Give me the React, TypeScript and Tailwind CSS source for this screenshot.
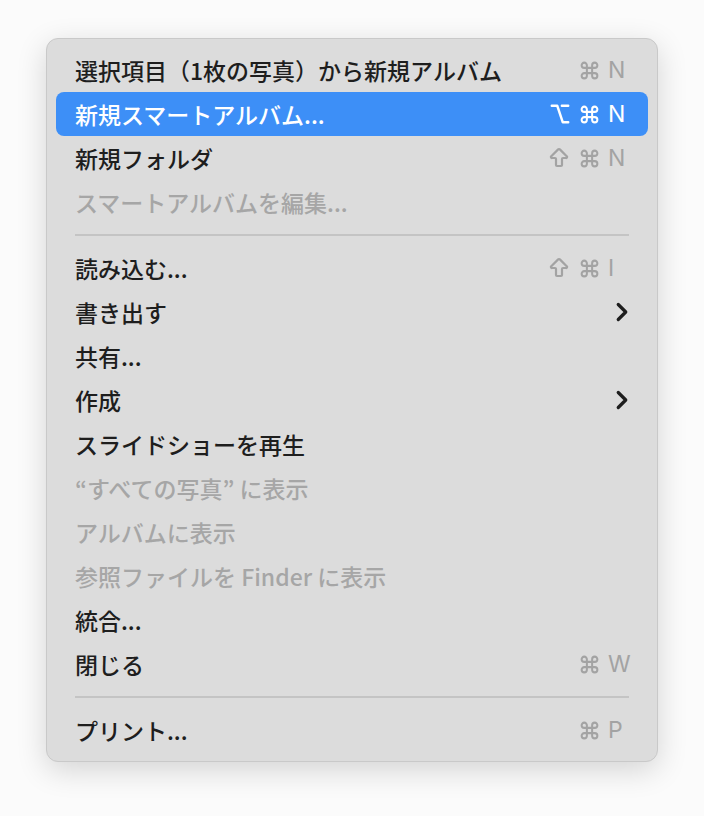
import { ArrowBigUp, ChevronRight, Command, Option } from 'lucide-react'

type Key = 'cmd' | 'opt' | 'shift' | string

interface Item {
  label: string
  keys?: Key[]
  disabled?: boolean
  active?: boolean
  submenu?: boolean
}

type Entry = Item | 'sep'

const entries: Entry[] = [
  { label: '選択項目（1枚の写真）から新規アルバム', keys: ['cmd', 'N'] },
  { label: '新規スマートアルバム...', keys: ['opt', 'cmd', 'N'], active: true },
  { label: '新規フォルダ', keys: ['shift', 'cmd', 'N'] },
  { label: 'スマートアルバムを編集...', disabled: true },
  'sep',
  { label: '読み込む...', keys: ['shift', 'cmd', 'I'] },
  { label: '書き出す', submenu: true },
  { label: '共有...' },
  { label: '作成', submenu: true },
  { label: 'スライドショーを再生' },
  { label: '“すべての写真” に表示', disabled: true },
  { label: 'アルバムに表示', disabled: true },
  { label: '参照ファイルを Finder に表示', disabled: true },
  { label: '統合...' },
  { label: '閉じる', keys: ['cmd', 'W'] },
  'sep',
  { label: 'プリント...', keys: ['cmd', 'P'] },
]

function KeyGlyph({ k }: { k: Key }) {
  if (k === 'cmd') return <Command size={21} strokeWidth={2.3} />
  if (k === 'opt') return <Option size={22} strokeWidth={2.6} />
  if (k === 'shift') return <ArrowBigUp size={24} strokeWidth={2.2} />
  return (
    <span className="text-[23px] leading-none font-['Inter',sans-serif] w-[18px] text-left whitespace-nowrap">
      {k}
    </span>
  )
}

function MenuRow({ item }: { item: Item }) {
  const text = item.active ? 'text-white' : item.disabled ? 'text-[#a6a6a6]' : 'text-[#1e1e1e]'
  const keyColor = item.active ? 'text-white' : 'text-[#a3a3a3]'
  return (
    <div
      className={`h-[44px] flex items-center justify-between pl-[19px] pr-[22px] rounded-[8px] ${item.active ? 'bg-[#3d8ff7]' : ''}`}
    >
      <span className={`text-[23px] leading-none font-medium whitespace-nowrap ${text}`}>{item.label}</span>
      {item.keys && (
        <span className={`flex items-center gap-[8px] ${keyColor}`}>
          {item.keys.map((k, i) => <KeyGlyph key={i} k={k} />)}
        </span>
      )}
      {item.submenu && (
        <ChevronRight size={30} strokeWidth={2.6} className="text-[#1e1e1e] -mr-[11px]" />
      )}
    </div>
  )
}

export default function App() {
  return (
    <div className="min-h-[816px] w-[704px] bg-[#fbfbfb] pt-[38px] pl-[46px] font-['Noto_Sans_CJK_JP','Noto_Sans',sans-serif]">
      <div className="w-[612px] rounded-[12px] bg-[#dcdcdc] border border-[#c9c9c9] px-[9px] py-[9px] shadow-[0_8px_30px_rgba(0,0,0,0.16)]">
        {entries.map((e, i) =>
          e === 'sep' ? (
            <div key={i} className="h-[22px] flex items-center px-[19px]">
              <div className="h-[2px] w-full bg-[#c4c4c4]" />
            </div>
          ) : (
            <MenuRow key={i} item={e} />
          ),
        )}
      </div>
    </div>
  )
}
